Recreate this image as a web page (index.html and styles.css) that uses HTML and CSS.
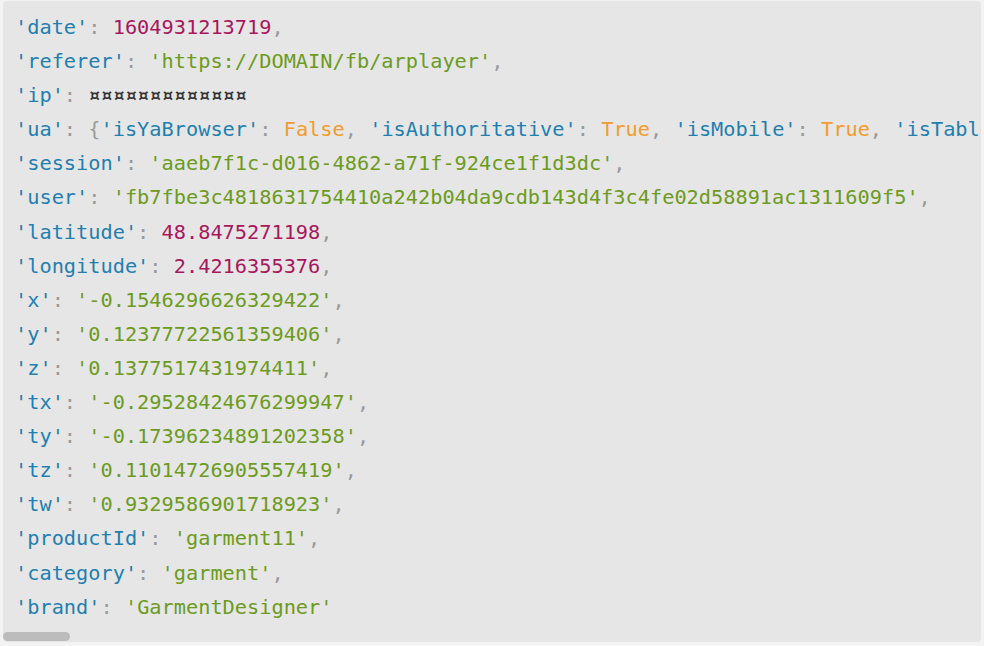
FILE: index.html
```html
<!DOCTYPE html>
<html>
<head>
<meta charset="utf-8">
<link rel="stylesheet" href="styles.css">
</head>
<body>
<div class="box">
<pre class="code"><span class="k">'date'</span><span class="p">:</span> <span class="n">1604931213719</span><span class="p">,</span>
<span class="k">'referer'</span><span class="p">:</span> <span class="s">'https://DOMAIN/fb/arplayer'</span><span class="p">,</span>
<span class="k">'ip'</span><span class="p">:</span> <span class="x">¤¤¤¤¤¤¤¤¤¤¤¤¤</span>
<span class="k">'ua'</span><span class="p">: {</span><span class="k">'isYaBrowser'</span><span class="p">:</span> <span class="b">False</span><span class="p">,</span> <span class="k">'isAuthoritative'</span><span class="p">:</span> <span class="b">True</span><span class="p">,</span> <span class="k">'isMobile'</span><span class="p">:</span> <span class="b">True</span><span class="p">,</span> <span class="k">'isTablet'</span><span class="p">:</span> <span class="b">False</span><span class="p">}</span>
<span class="k">'session'</span><span class="p">:</span> <span class="s">'aaeb7f1c-d016-4862-a71f-924ce1f1d3dc'</span><span class="p">,</span>
<span class="k">'user'</span><span class="p">:</span> <span class="s">'fb7fbe3c4818631754410a242b04da9cdb143d4f3c4fe02d58891ac1311609f5'</span><span class="p">,</span>
<span class="k">'latitude'</span><span class="p">:</span> <span class="n">48.8475271198</span><span class="p">,</span>
<span class="k">'longitude'</span><span class="p">:</span> <span class="n">2.4216355376</span><span class="p">,</span>
<span class="k">'x'</span><span class="p">:</span> <span class="s">'-0.1546296626329422'</span><span class="p">,</span>
<span class="k">'y'</span><span class="p">:</span> <span class="s">'0.12377722561359406'</span><span class="p">,</span>
<span class="k">'z'</span><span class="p">:</span> <span class="s">'0.1377517431974411'</span><span class="p">,</span>
<span class="k">'tx'</span><span class="p">:</span> <span class="s">'-0.29528424676299947'</span><span class="p">,</span>
<span class="k">'ty'</span><span class="p">:</span> <span class="s">'-0.17396234891202358'</span><span class="p">,</span>
<span class="k">'tz'</span><span class="p">:</span> <span class="s">'0.11014726905557419'</span><span class="p">,</span>
<span class="k">'tw'</span><span class="p">:</span> <span class="s">'0.9329586901718923'</span><span class="p">,</span>
<span class="k">'productId'</span><span class="p">:</span> <span class="s">'garment11'</span><span class="p">,</span>
<span class="k">'category'</span><span class="p">:</span> <span class="s">'garment'</span><span class="p">,</span>
<span class="k">'brand'</span><span class="p">:</span> <span class="s">'GarmentDesigner'</span></pre>
<div class="track"><div class="thumb"></div></div>
</div>
</body>
</html>
```

FILE: styles.css
```css
html, body {
  margin: 0;
  padding: 0;
  background: #f3f3f3;
}
body {
  width: 984px;
  height: 646px;
  overflow: hidden;
}
.box {
  margin: 1px 3px 0 3px;
  height: 641px;
  background: #e6e6e6;
  border-radius: 4px;
  overflow: hidden;
  display: flex;
  flex-direction: column;
}
.code {
  margin: 0;
  flex: 1;
  padding: 9px 0 0 12px;
  font-family: "DejaVu Sans Mono", "Liberation Mono", monospace;
  font-size: 20.3px;
  line-height: 34.1px;
  white-space: pre;
  overflow: hidden;
  color: #999999;
}
.k { color: #1f7fb0; }
.n { color: #a8175c; }
.s { color: #6c9b20; }
.b { color: #f39b2b; }
.p { color: #9a9a9a; }
.x { color: #333333; font-weight: bold; }
.track {
  height: 10px;
  flex: none;
}
.thumb {
  width: 67px;
  height: 9px;
  background: #bcbcbc;
  border-radius: 5px;
}
```
